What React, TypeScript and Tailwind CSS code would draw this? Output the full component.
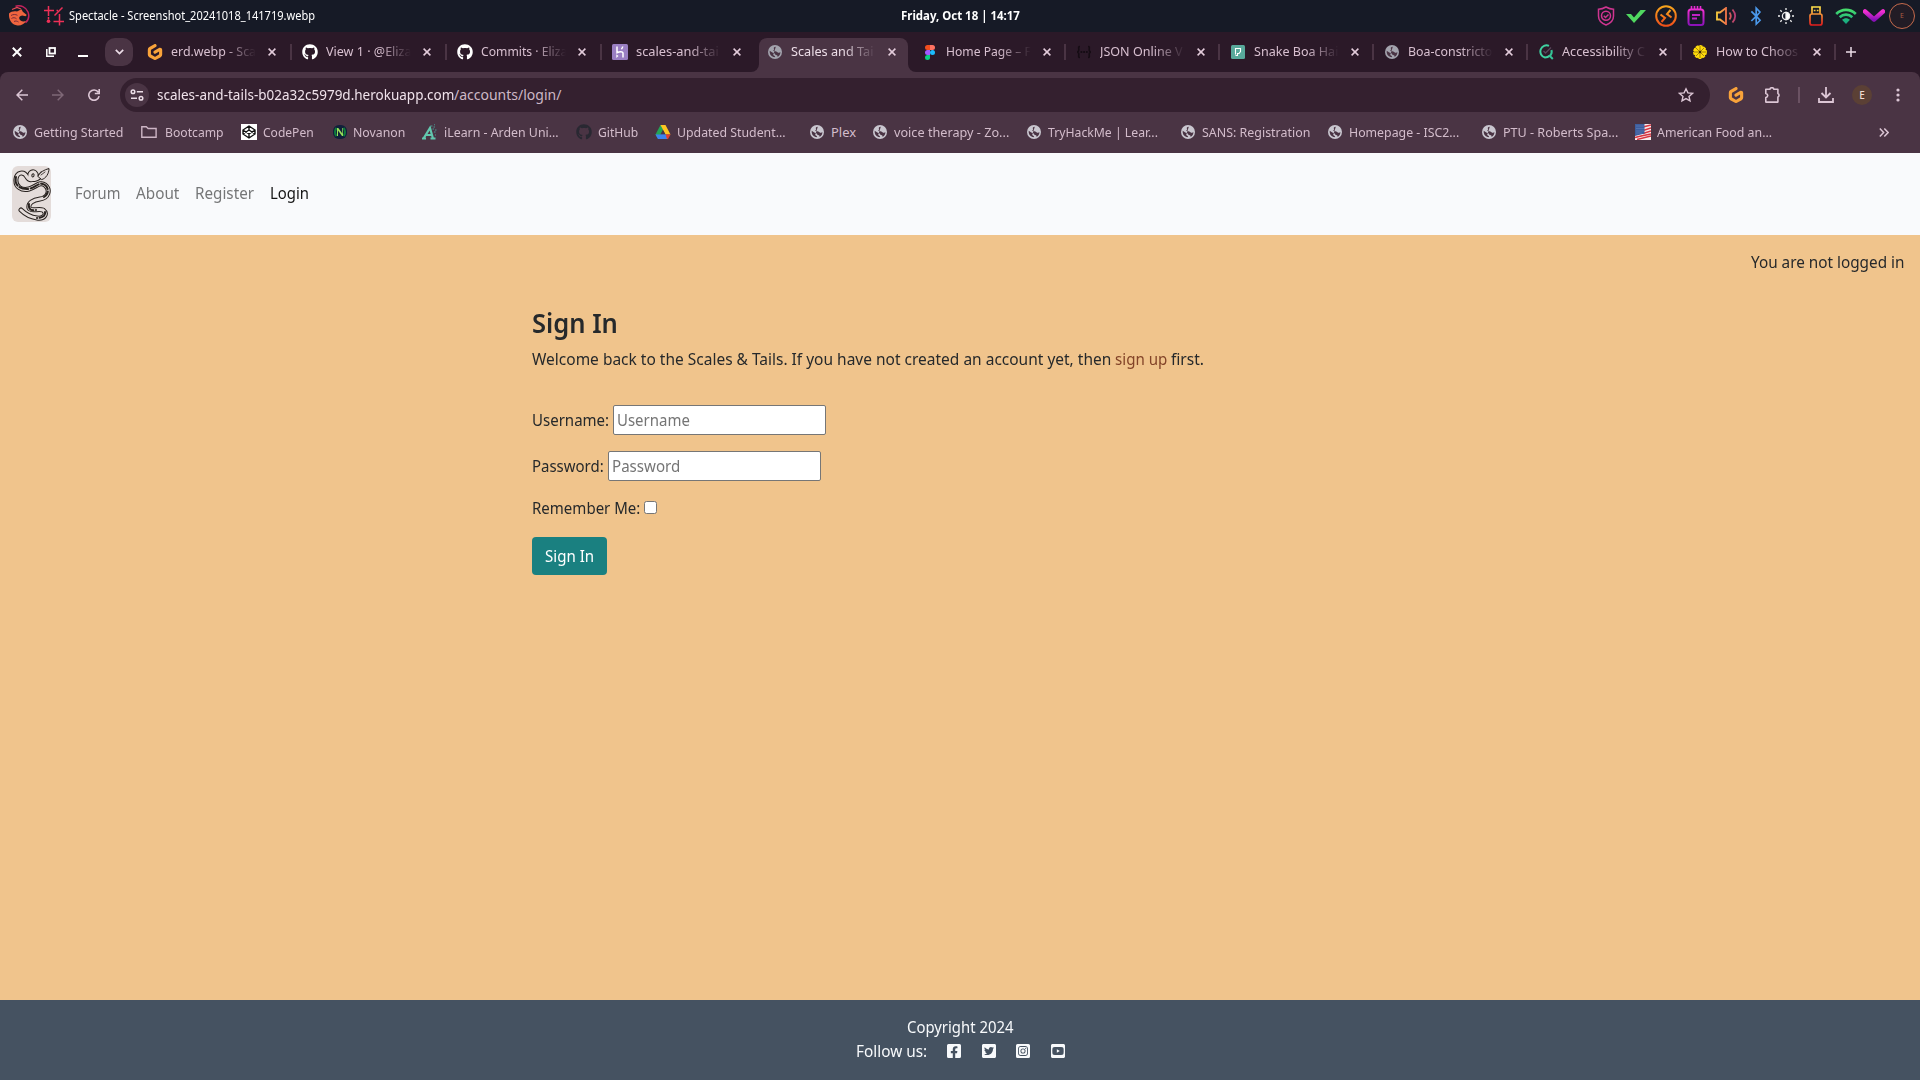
import { useLayoutEffect, useRef, useState, type ReactNode } from "react";
import { clsx } from "clsx";
import {
  FaBluetoothB,
  FaFacebookSquare,
  FaGithub,
  FaInstagramSquare,
  FaTwitterSquare,
  FaYoutubeSquare,
} from "react-icons/fa";
import { SiGitpod } from "react-icons/si";

/** Condenses or widens a single line of text so that it fills its box. */
function Fit({ className, children }: { className: string; children: ReactNode }) {
  const outer = useRef<HTMLSpanElement>(null);
  const inner = useRef<HTMLSpanElement>(null);
  const [scale, setScale] = useState(1);
  useLayoutEffect(() => {
    if (outer.current && inner.current) {
      setScale(outer.current.clientWidth / inner.current.offsetWidth);
    }
  }, []);
  return (
    <span ref={outer} className={clsx("inline-block shrink-0 whitespace-nowrap", className)}>
      <span ref={inner} className="inline-block origin-left" style={{ transform: `scaleX(${scale})` }}>
        {children}
      </span>
    </span>
  );
}

/* ---------- shared glyphs ---------- */

function Globe({ className }: { className: string }) {
  return (
    <svg viewBox="0 0 14 14" className={clsx("size-3.5", className)}>
      <circle cx="7" cy="7" r="7" fill="currentColor" />
      <path
        d="M7.800 1.700C6 2 5.300 2.900 6 3.800c.6.9-.5 1.200-.8 1.900.6.700 2 .2 3.200.8.900.500 1.500 1.400 2.500 1.300.700 0 1.200-.4 1.500-.8.100 2.300-1 4-2.800 4.900.1-1.200-.5-1.700-1.500-1.800-.9-.1-1-.9-1.500-1.500-.6-.7-1.600-.5-2.300-1L1.700 5.800c-.4 3 1.100 5.300 3.700 6.200.600.2 1.200.200 1.700.1-.1-1-.6-1.400-1.300-1.700-.8-.4-.6-1.200-.2-1.700"
        fill="#4a3444"
      />
    </svg>
  );
}

function GitpodMark() {
  return <SiGitpod className="size-4 text-[#f9a33a]" />;
}

function HerokuMark() {
  return (
    <svg viewBox="0 0 16 16" className="size-4">
      <rect width="16" height="16" rx="1.500" fill="#9a7fc2" />
      <path d="M5 2.500v6.200c2-.9 6-1.900 6 .6v4.200M10.700 2.500c-.1 1-.5 1.800-1.300 2.600" stroke="#fff" strokeWidth="1.500" fill="none" />
      <path d="M4.300 10.200v3.800l2.200-1.900z" fill="#fff" />
    </svg>
  );
}

function FigmaMark() {
  return (
    <svg viewBox="0 0 10 15" className="h-[15px] w-2.5">
      <path d="M5 0H2.500a2.500 2.500 0 000 5H5z" fill="#f24e1e" />
      <path d="M5 0h2.500a2.500 2.500 0 010 5H5z" fill="#ff7262" />
      <path d="M5 5H2.500a2.500 2.500 0 000 5H5z" fill="#a259ff" />
      <circle cx="7.500" cy="7.500" r="2.500" fill="#1abcfe" />
      <path d="M2.500 10H5v2.500A2.500 2.500 0 112.500 10z" fill="#0acf83" />
    </svg>
  );
}

function JsonMark() {
  return (
    <svg viewBox="0 0 16 14" className="h-3.5 w-4" fill="none" stroke="#150c14" strokeWidth="1.600">
      <path d="M4 1.500C2 1.500 2.800 3 2.800 4.500S2.500 7 1 7c1.500 0 1.800 1 1.800 2.500S2 12.500 4 12.500M12 1.500c2 0 1.200 1.500 1.200 3S13.500 7 15 7c-1.500 0-1.800 1-1.800 2.500s.8 3-1.200 3" />
      <path d="M4.500 7h1.800M7.200 7H9M9.900 7h1.800" strokeWidth="1.800" />
    </svg>
  );
}

function PetMark() {
  return (
    <svg viewBox="0 0 14 14" className="size-3.5">
      <rect width="14" height="14" rx="1.500" fill="#58a99b" />
      <path d="M4.500 9.500V3.500H9.500V6.500L8 8.500H6.500V10.500H4.500" stroke="#fff" strokeWidth="1.100" fill="none" />
    </svg>
  );
}

function AccessMark() {
  return (
    <svg viewBox="0 0 16 16" className="size-4" fill="none">
      <path d="M11 1.800A6.200 6.200 0 107 13.500c2 0 3.500-.6 4.600-1.700" stroke="#3fd0a0" strokeWidth="2" />
      <path d="M13.500 6c.6 2.200 0 4.300-1.700 6l3 3" stroke="#35c596" strokeWidth="2" />
      <path d="M5.500 7l2 2L13 3.500" stroke="#57455a" strokeWidth="1.300" />
    </svg>
  );
}

function CitrusMark() {
  return (
    <svg viewBox="0 0 14 14" className="size-3.5">
      <circle cx="7" cy="7" r="6.200" fill="#ffdc0a" stroke="#ffdc0a" strokeWidth="1.400" strokeDasharray="3 1" />
      <path d="M7 1v12M1 7h12M2.800 2.800l8.400 8.400M11.200 2.800l-8.400 8.400" stroke="#7d5c10" strokeWidth=".7" />
      <circle cx="7" cy="7" r="1.200" fill="#3a2508" />
    </svg>
  );
}

function CloseGlyph() {
  return (
    <svg viewBox="0 0 8 8" className="size-2">
      <path d="M.6.6l6.800 6.800M7.400.6L.6 7.400" stroke="#e3ccdb" strokeWidth="1.500" />
    </svg>
  );
}

/* ---------- desktop panel ---------- */

function Panel() {
  return (
    <div className="grid h-8 grid-cols-[1fr_auto_1fr] items-center bg-[#161a26] text-white">
      <div className="flex items-center pl-2">
        <svg viewBox="0 0 22 22" className="size-[22px]" fill="none">
          <path d="M7.500 1.200c5-1.500 10.500.8 12.500 5.800 1.500 4 .5 8-2.500 10.800" stroke="#c0225c" strokeWidth="1.500" />
          <path d="M1 8.500C3 6.500 6 5.800 9 6.500l4.500-2.200 1.300 2.500 4 3.200-1.300 1.300-3.300-.8c-2.500.2-3.500 1.800-2.800 3.500.900 2.300 3.600 3 6.600 2-2 3.500-5.500 5-9.500 4.300C3.500 19.300.5 14.500 1 8.500z" fill="#f0653f" />
          <path d="M3 10.500c2-1.300 4.500-1.300 6.500-.2M3.500 13.500c1.700-1.200 3.500-1 5 .3M6 16.500c1.500-.8 3-.5 4.500.5" stroke="#7b2b38" />
          <path d="M4 4.500L9 2.500l4 1.500" stroke="#e84a55" strokeWidth="1.300" />
        </svg>
        <svg viewBox="0 0 20 20" className="ml-3.5 size-5" fill="none" stroke="#ee3057" strokeWidth="1.500">
          <path d="M4.500 0v10M0 4.500h10M12.500 4.500H14M15.500 8v11.500M9.500 15.500H20M4.500 11v2.500M18.500 1.500l-8 8" />
          <circle cx="4.500" cy="15.300" r="1.800" fill="#ee3057" stroke="none" />
        </svg>
        <Fit className="ml-[5px] w-[246px] text-[12.500px] leading-[29px]">
          <span className="block -translate-y-px">Spectacle - Screenshot_20241018_141719.webp</span>
        </Fit>
      </div>
      <Fit className="ml-px w-[119px] text-[12.500px] font-bold leading-[30px]">Friday, Oct 18 | 14:17</Fit>
      <Tray />
    </div>
  );
}

function Tray() {
  return (
    <div className="flex items-center justify-end pr-[5px]">
      <svg width="0" height="0" className="absolute">
        <defs>
          <linearGradient id="orange" x1="0" y1="0" x2="0" y2="1">
            <stop stopColor="#f7a51c" />
            <stop offset="1" stopColor="#f0501a" />
          </linearGradient>
          <linearGradient id="magenta" x1="0" y1="0" x2="0" y2="1">
            <stop stopColor="#f12fd0" />
            <stop offset="1" stopColor="#8a12b8" />
          </linearGradient>
          <linearGradient id="sound" gradientUnits="userSpaceOnUse" x1="0" y1="0" x2="21" y2="0">
            <stop stopColor="#f7d33c" />
            <stop offset=".5" stopColor="#f0704a" />
            <stop offset="1" stopColor="#a5307c" />
          </linearGradient>
          <linearGradient id="usb" x1="0" y1="0" x2="0" y2="1">
            <stop stopColor="#ffe14a" />
            <stop offset="1" stopColor="#e01c1c" />
          </linearGradient>
          <linearGradient id="green" gradientUnits="userSpaceOnUse" x1="0" y1="0" x2="0" y2="16">
            <stop stopColor="#4be26a" />
            <stop offset="1" stopColor="#12a583" />
          </linearGradient>
        </defs>
      </svg>
      <span className="flex w-[30px] justify-center">
        <svg viewBox="0 0 18 20" className="h-5 w-[18px]" fill="none" stroke="#cf3590" strokeWidth="1.500">
          <path d="M9 1c2.500 1.500 5 2.200 7.500 2.200V10c0 4.500-3.500 7.500-7.500 9-4-1.500-7.500-4.500-7.500-9V3.200C4 3.200 6.500 2.500 9 1z" />
          <circle cx="9" cy="9.800" r="4.500" />
          <path d="M6.800 9.800l1.700 1.700 3-3" />
        </svg>
      </span>
      <span className="flex w-[30px] justify-center">
        <svg viewBox="0 0 20 13" className="h-[13px] w-5">
          <path d="M0 4h5l3 3.500L14.500 0H20L8 13z" fill="#50d860" />
        </svg>
      </span>
      <span className="flex w-[30px] justify-center">
        <svg viewBox="0 0 22 22" className="size-[22px]" fill="none" stroke="url(#orange)" strokeWidth="2">
          <circle cx="11" cy="11" r="9.800" />
          <path d="M5.500 9.500L10 13l-3.500 4M16.500 12.500L12 9l3.500-4" />
        </svg>
      </span>
      <span className="flex w-[30px] justify-center">
        <svg viewBox="0 0 18 20" className="h-5 w-[18px]" fill="none" stroke="url(#magenta)" strokeWidth="2">
          <rect x="1.500" y="3.500" width="15" height="15.500" rx="2.500" />
          <path d="M4.500 0v4M7.500 0v4M10.500 0v4M13.500 0v4" stroke="#e42cd2" strokeWidth="1.600" />
          <path d="M5 9h8M5 12.500h5" stroke="#c122c6" />
        </svg>
      </span>
      <span className="flex w-[30px] justify-center">
        <svg viewBox="0 0 21 18" className="h-[18px] w-[21px]" fill="none" stroke="url(#sound)" strokeWidth="1.800">
          <path d="M1 5.500h3L10 1v16l-6-4.500H1z" />
          <path d="M13.500 5.500c1.500 2 1.500 5 0 7M16.500 2.500c3.300 4 3.300 9 0 13" />
        </svg>
      </span>
      <span className="flex w-[30px] justify-center">
        <FaBluetoothB className="h-5 w-4 text-[#4a98ea]" />
      </span>
      <span className="flex w-[30px] justify-center">
        <svg viewBox="0 0 16 16" className="size-4" fill="none" stroke="#eee" strokeWidth="1.300">
          <circle cx="8" cy="8" r="3.600" />
          <path d="M8 4.400a3.600 3.600 0 010 7.200z" fill="#fff" />
          <path d="M8 0v2M8 14v2M0 8h2M14 8h2M2.300 2.300l1.500 1.500M12.200 12.200l1.500 1.500M13.700 2.300l-1.500 1.500M3.800 12.200l-1.500 1.500" />
        </svg>
      </span>
      <span className="flex w-[30px] justify-center">
        <svg viewBox="0 0 14 20" className="h-5 w-3.5" fill="none" stroke="url(#usb)" strokeWidth="1.700">
          <path d="M3 8V1h8v7M3 8h8a2 2 0 012 2v7a2 2 0 01-2 2H3a2 2 0 01-2-2v-7a2 2 0 012-2z" />
          <path d="M4.800 4.500h1.700M7.800 4.500h1.700" stroke="#f5c93c" />
        </svg>
      </span>
      <span className="flex w-[30px] justify-center">
        <svg viewBox="0 0 22 16" className="h-4 w-[22px]" fill="none" stroke="url(#green)" strokeWidth="2.600">
          <path d="M1.200 6c5.500-5.500 14-5.500 19.600 0M4.700 9.200c3.600-3.500 9-3.500 12.600 0" />
          <path d="M7 11.800c2.500-2.100 5.500-2.100 8 0L11 16z" fill="url(#green)" stroke="none" />
        </svg>
      </span>
      <span className="flex w-[26px] justify-center">
        <svg viewBox="0 0 22 14" className="h-3.5 w-[22px]" fill="none">
          <path d="M2 2.500l9 8 9-8" stroke="url(#magenta)" strokeWidth="4.500" strokeLinejoin="round" strokeLinecap="round" />
        </svg>
      </span>
      <span className="ml-0.5 flex size-[26px] items-center justify-center rounded-full border border-[#c56a4c] bg-[#221c25] text-[7px] text-[#a85a42]">
        E
      </span>
    </div>
  );
}

/* ---------- tab strip ---------- */

type Tab = { title: string; width: string; cell: string; icon: ReactNode; divider?: boolean; active?: boolean };

const wide = "w-[155px]";
const narrow = "w-[154px]";

const tabs: Tab[] = [
  { title: "erd.webp - Sca", width: "w-[85px]", cell: wide, icon: <GitpodMark />, divider: true },
  { title: "View 1 · @Eliza", width: "w-[86px]", cell: wide, icon: <FaGithub className="size-4 text-white" />, divider: true },
  { title: "Commits · Eliza", width: "w-[86px]", cell: wide, icon: <FaGithub className="size-4 text-white" />, divider: true },
  { title: "scales-and-tai", width: "w-[83px]", cell: wide, icon: <HerokuMark /> },
  { title: "Scales and Tai", width: "w-[83px]", cell: wide, icon: <Globe className="text-[#a3a3ad]" />, active: true },
  { title: "Home Page – F", width: "w-[85px]", cell: narrow, icon: <FigmaMark />, divider: true },
  { title: "JSON Online V", width: "w-[83px]", cell: narrow, icon: <JsonMark />, divider: true },
  { title: "Snake Boa Hai", width: "w-[84px]", cell: narrow, icon: <PetMark />, divider: true },
  { title: "Boa-constricto", width: "w-[84px]", cell: narrow, icon: <Globe className="text-[#a3a3ad]" />, divider: true },
  { title: "Accessibility C", width: "w-[83px]", cell: narrow, icon: <AccessMark />, divider: true },
  { title: "How to Choos", width: "w-[82px]", cell: narrow, icon: <CitrusMark />, divider: true },
];

function TabItem({ tab }: { tab: Tab }) {
  return (
    <div className={clsx("relative flex h-full shrink-0 items-center", tab.cell)}>
      {tab.active && (
        <div className="absolute bottom-0 left-0.5 top-1.5 w-[149px] rounded-t-lg bg-[#4a3444]">
          <span className="absolute -left-2 bottom-0 size-2 bg-[#4a3444]">
            <span className="block size-2 rounded-br-lg bg-[#2b1928]" />
          </span>
          <span className="absolute -right-2 bottom-0 size-2 bg-[#4a3444]">
            <span className="block size-2 rounded-bl-lg bg-[#2b1928]" />
          </span>
        </div>
      )}
      <span className="relative ml-2.5 flex w-4 justify-center">{tab.icon}</span>
      <span className="relative mb-0.5 ml-2 flex w-[85px] overflow-hidden [mask-image:linear-gradient(to_right,black_62%,transparent_100%)]">
        <Fit className={clsx("text-[13px] leading-5", tab.width, tab.active ? "text-[#ecdde7]" : "text-[#d8c0d0]")}>{tab.title}</Fit>
      </span>
      <span className="relative ml-3 flex">
        <CloseGlyph />
      </span>
      {tab.divider && <span className="absolute right-0 h-4 w-0.5 bg-[#4a3444]" />}
    </div>
  );
}

function TabStrip() {
  return (
    <div className="flex h-10 items-center bg-[#2b1928]">
      <svg viewBox="0 0 10 10" className="ml-3 size-2.5">
        <path d="M.8.8l8.400 8.400M9.200.8L.8 9.200" stroke="#fff" strokeWidth="2" />
      </svg>
      <svg viewBox="0 0 10 10" className="ml-6 size-2.5" fill="none" stroke="#fff">
        <rect x="3.500" y="1" width="5.500" height="5.500" strokeWidth="1.800" />
        <path d="M.8 2v7.200H8" strokeWidth="1.500" />
      </svg>
      <span className="ml-[22px] mt-2 h-0.5 w-2.5 bg-white" />
      <span className="ml-[17px] flex size-7 items-center justify-center rounded-[10px] bg-[#4a3444]">
        <svg viewBox="0 0 9 6" className="h-1.5 w-[9px]" fill="none">
          <path d="M.8.8L4.500 4.500 8.200.8" stroke="#ecdde7" strokeWidth="1.700" />
        </svg>
      </span>
      <div className="ml-1 flex h-full">
        {tabs.map((t) => (
          <TabItem key={t.title} tab={t} />
        ))}
      </div>
      <svg viewBox="0 0 10 10" className="ml-2.5 size-2.5">
        <path d="M5 0v10M0 5h10" stroke="#ecdde7" strokeWidth="1.500" />
      </svg>
    </div>
  );
}

/* ---------- toolbar ---------- */

function Toolbar() {
  return (
    <div className="flex h-[46px] items-center text-[#dcc6d5]">
      <svg viewBox="0 0 12 12" className="ml-4 size-3" fill="none" stroke="currentColor" strokeWidth="1.500">
        <path d="M12 6H1M6.300.7L1 6l5.300 5.300" />
      </svg>
      <svg viewBox="0 0 12 12" className="ml-6 size-3 text-[#7f6877]" fill="none" stroke="currentColor" strokeWidth="1.500">
        <path d="M0 6h11M5.700.7L11 6l-5.300 5.300" />
      </svg>
      <svg viewBox="0 0 12 12" className="ml-6 size-3" fill="none" stroke="currentColor" strokeWidth="1.600">
        <path d="M10.300 3.200A5.200 5.200 0 1011.100 7.200M11.200 0v4.500H6.800" />
      </svg>
      <div className="ml-5 flex h-[34px] w-[1590px] items-center rounded-full bg-[#34202f] pl-[5px]">
        <span className="flex size-6 items-center justify-center rounded-full bg-[#4a3444]">
          <svg viewBox="0 0 14 12" className="h-3 w-3.5" fill="none" stroke="#ecdde7" strokeWidth="1.500">
            <circle cx="3" cy="2.800" r="1.800" />
            <path d="M6.800 2.800H13M1 9.200h6" />
            <circle cx="11" cy="9.200" r="1.800" />
          </svg>
        </span>
        <Fit className="ml-2 w-[297px] text-[14px] leading-6 text-[#f0e2eb]">scales-and-tails-b02a32c5979d.herokuapp.com</Fit>
        <Fit className="w-[107px] text-[14px] leading-6 text-[#cdb8c6]">/accounts/login/</Fit>
        <svg viewBox="0 0 16 16" className="ml-auto mr-4 size-4" fill="none" stroke="currentColor" strokeWidth="1.400">
          <path d="M8 1.800l1.900 4.100 4.500.5-3.400 3 1 4.500L8 11.600l-4 2.300 1-4.500-3.400-3 4.500-.5z" />
        </svg>
      </div>
      <span className="ml-[18px]">
        <GitpodMark />
      </span>
      <svg viewBox="0 0 18 16" className="ml-5 h-4 w-[18px]" fill="none" stroke="currentColor" strokeWidth="1.600">
        <path d="M1.800 2.300H6a1.900 1.600 0 013.800 0h4.100v4.200a1.700 1.900 0 010 3.600v5H1.800v-4.500c2.600-.6 2.600-3.500 0-4.100z" strokeLinejoin="round" />
      </svg>
      <span className="ml-4 h-4 w-0.5 bg-[#6b5263]" />
      <svg viewBox="0 0 16 16" className="ml-[18px] size-4" fill="none" stroke="currentColor" strokeWidth="1.800">
        <path d="M8 0v10M3.500 6L8 10.500 12.500 6M1 11v4h14v-4" />
      </svg>
      <span className="ml-[18px] flex size-5 items-center justify-center rounded-full bg-[#5b4035] text-[10px] font-medium text-[#f0dcd0]">E</span>
      <svg viewBox="0 0 4 14" className="ml-6 h-3.5 w-1" fill="currentColor">
        <circle cx="2" cy="2" r="1.600" />
        <circle cx="2" cy="7" r="1.600" />
        <circle cx="2" cy="12" r="1.600" />
      </svg>
    </div>
  );
}

/* ---------- bookmarks ---------- */

const globe = <Globe className="text-[#c9c6cf]" />;

const bookmarks: { label: string; cell: string; text: string; icon: ReactNode }[] = [
  { label: "Getting Started", cell: "w-[129px]", text: "w-[89px]", icon: globe },
  {
    label: "Bootcamp",
    cell: "w-[100px] gap-2",
    text: "w-[59px]",
    icon: (
      <svg viewBox="0 0 16 12" className="h-3 w-4" fill="none" stroke="#cdb5c5" strokeWidth="1.400">
        <path d="M.8.8h4.500l1.800 1.700h8v8.700H.8z" />
      </svg>
    ),
  },
  {
    label: "CodePen",
    cell: "w-[91px]",
    text: "w-[51px]",
    icon: (
      <svg viewBox="0 0 16 16" className="size-4" fill="none" stroke="#111" strokeWidth="1.400">
        <rect width="16" height="16" fill="#fff" stroke="none" />
        <path d="M8 2l6 4v4l-6 4-6-4V6zM2 6l6 4 6-4M2 10l6-4 6 4M8 2v4M8 10v4" />
      </svg>
    ),
  },
  {
    label: "Novanon",
    cell: "w-[90px] gap-[5px]",
    text: "w-[52px]",
    icon: (
      <svg viewBox="0 0 14 14" className="size-3.5">
        <rect width="14" height="14" rx="6" fill="#11203a" />
        <path d="M3.500 3C1.500 5 1.500 9 3.500 11M10.500 3c2 2 2 6 0 8" stroke="#0f7d3c" strokeWidth="2" fill="none" />
        <path d="M4 11V3h1.300l4 5.500V3H10v8H9L5 5.500V11z" fill="#9adf5a" />
      </svg>
    ),
  },
  {
    label: "iLearn - Arden Uni...",
    cell: "w-[154px]",
    text: "w-[115px]",
    icon: (
      <svg viewBox="0 0 16 16" className="size-4" fill="none">
        <path d="M1.500 14.500L8 4l3 10.500M4 11h6M0 14.500h4M8.500 14.500h5" stroke="#62c7ae" strokeWidth="2.200" />
        <path d="M9 2h1.500M11.500 3H13M10.500 5H12M13 6h1.500M12 8h1.500M12 .8h1M13 11h1" stroke="#4d9793" />
      </svg>
    ),
  },
  { label: "GitHub", cell: "w-[79px]", text: "w-10", icon: <FaGithub className="size-4 text-[#292832]" /> },
  {
    label: "Updated Student...",
    cell: "w-[154px]",
    text: "w-[109px]",
    icon: (
      <svg viewBox="0 0 16 14" className="h-3.5 w-4">
        <path d="M5.500 0H8l2.500 4.500L8 4.800 3 14 .5 9.500z" fill="#23a455" />
        <path d="M5.500 0h5l5 9.500h-5z" fill="#fcc520" />
        <path d="M.5 9.500h11L9.500 14H3z" fill="#3d83ee" />
        <path d="M10.500 9.500h5L13 14H9.500z" fill="#e5402f" />
        <path d="M8 5.200l2.300 4.300H5.700z" fill="#4a3444" />
        <path d="M5.500 9.500h5l1.500 4.500H3z" fill="#3d83ee" />
      </svg>
    ),
  },
  { label: "Plex", cell: "w-[63px]", text: "w-[25px]", icon: globe },
  { label: "voice therapy - Zo...", cell: "w-[154px]", text: "w-[115px]", icon: globe },
  { label: "TryHackMe | Lear...", cell: "w-[154px]", text: "w-[110px]", icon: globe },
  { label: "SANS: Registration", cell: "w-[147px]", text: "w-[108px]", icon: globe },
  { label: "Homepage - ISC2...", cell: "w-[154px]", text: "w-[110px]", icon: globe },
  { label: "PTU - Roberts Spa...", cell: "w-[154px]", text: "w-[115px]", icon: globe },
  {
    label: "American Food an...",
    cell: "w-[154px]",
    text: "w-[115px]",
    icon: (
      <svg viewBox="0 0 16 16" className="size-4">
        <rect width="16" height="16" fill="#f7ecec" />
        <path d="M8 3l8-2M8 6.500L16 4M8 9.500l8-2.500M0 13.500l6-1.500 10-2M2 15.500l14-3.500" stroke="#d83440" strokeWidth="1.500" />
        <path d="M0 0h9.500v9.500L0 12z" fill="#3d5e9e" />
        <path d="M1.500 2h7M1.500 4.500h7M1.500 7h7M1.500 9h5" stroke="#8098c8" strokeWidth=".7" strokeDasharray="1 1" />
      </svg>
    ),
  },
];

function Bookmarks() {
  return (
    <div className="flex h-[35px] items-center pb-[7px] pl-3 text-[13px] leading-5 text-[#d3bccb]">
      {bookmarks.map((b) => (
        <div key={b.label} className={clsx("flex shrink-0 items-center", !b.cell.includes("gap") && "gap-1.5", b.cell)}>
          <span className="flex w-4 shrink-0 justify-center">{b.icon}</span>
          <Fit className={clsx("mb-px", b.text)}>{b.label}</Fit>
        </div>
      ))}
      <svg viewBox="0 0 10 9" className="ml-auto mr-[31px] h-[9px] w-2.5" fill="none" stroke="#dcc6d5" strokeWidth="1.500">
        <path d="M.8.6l3.800 3.900L.8 8.400M5.300.6l3.800 3.900-3.800 3.900" />
      </svg>
    </div>
  );
}

/* ---------- web page ---------- */

function SnakeLogo() {
  const body =
    "M30 8C26 14 20 15 18 11 17 6 22 4 24 8 25 13 18 16 15 11 12 5 5 6 4 13 3 21 10 25 17 23 24 21 28 15 33 19 39 24 36 32 28 33 21 34 16 37 17 42 19 46 26 42 31 44 36 48 32 53 25 52 18 51 13 48 9 44";
  return (
    <svg viewBox="0 0 39 56" className="h-14 w-[39px] rounded-md bg-[#e4dcda]" fill="none" strokeLinecap="round" strokeLinejoin="round">
      <path d={body} stroke="#292320" strokeWidth="5" />
      <path d={body} stroke="#e4dcda" strokeWidth="3" />
      <path d="M4 11c-2 7 3 13 13 12 7-2 11-8 16-4 4 3 4 9-1 12M17 38c-1 5 2 7 7 6M33 46c1 4-3 6-8 6" stroke="#292320" strokeWidth="2" strokeDasharray="9 2.500" />
      <path d="M26 10c2-4 6-6 11-7.500 0 5-3 10-7 11z" fill="#e4dcda" stroke="#292320" />
      <path d="M29 9l4-3" stroke="#292320" strokeWidth=".8" />
    </svg>
  );
}

function Navbar() {
  return (
    <nav className="flex h-[82px] items-center bg-[#f9fafc] pl-3 text-[16px] leading-6 text-[#757677]">
      <SnakeLogo />
      <div className="mb-0.5 ml-6 flex">
        <Fit className="w-[45px]">Forum</Fit>
        <Fit className="ml-4 w-[43px]">About</Fit>
        <Fit className="ml-4 w-[59px]">Register</Fit>
        <Fit className="ml-4 w-[39px] text-[#141414]">Login</Fit>
      </div>
    </nav>
  );
}

const fieldClass = "flex h-[30px] w-[213px] items-center rounded-[2px] border border-[#767676] bg-white pb-px pl-[3px] text-[#757575]";

function SignIn() {
  return (
    <main className="flex-1 bg-[#f0c48c] text-[16px] leading-6 text-[#26292b]">
      <div className="flex justify-end pr-4 pt-[15px]">
        <Fit className="w-[153px]">You are not logged in</Fit>
      </div>
      <div className="ml-[532px] mt-8">
        <h1 className="flex text-[27px] font-semibold leading-[34px]">
          <Fit className="w-[86px]">Sign In</Fit>
        </h1>
        <p className="mt-[7px] flex">
          <Fit className="w-[579px]">Welcome back to the Scales &amp; Tails. If you have not created an account yet, then</Fit>
          <a className="ml-1 flex text-[#834428]">
            <Fit className="w-[52px]">sign up</Fit>
          </a>
          <Fit className="ml-1 w-[33px]">first.</Fit>
        </p>
        <form className="mt-[34px]">
          <div className="flex h-[30px] items-center">
            <Fit className="w-[77px]">Username:</Fit>
            <div className={clsx("ml-1", fieldClass)}>
              <Fit className="w-[73px]">Username</Fit>
            </div>
          </div>
          <div className="mt-4 flex h-[30px] items-center">
            <Fit className="w-[72px]">Password:</Fit>
            <div className={clsx("ml-1", fieldClass)}>
              <Fit className="w-[68px]">Password</Fit>
            </div>
          </div>
          <div className="mt-[15px] flex h-6 items-center">
            <Fit className="w-[108px]">Remember Me:</Fit>
            <span className="-mt-px ml-1 size-[13px] rounded-[2.500px] border border-[#767676] bg-white" />
          </div>
          <button type="button" className="mt-[17px] flex h-[38px] w-[75px] items-center justify-center rounded bg-[#1a8080] pb-px text-white">
            <Fit className="w-[49px]">Sign In</Fit>
          </button>
        </form>
      </div>
    </main>
  );
}

function Footer() {
  return (
    <footer className="flex h-20 flex-col items-center bg-[#455261] pt-[15px] text-[16px] leading-6 text-[#f8fafc]">
      <Fit className="w-[106px]">Copyright 2024</Fit>
      <div className="ml-0.5 flex items-center">
        <Fit className="w-[71px]">Follow us:</Fit>
        <div className="ml-[19px] flex gap-[18.500px] text-[16px]">
          <FaFacebookSquare />
          <FaTwitterSquare />
          <FaInstagramSquare />
          <FaYoutubeSquare />
        </div>
      </div>
    </footer>
  );
}

export default function App() {
  return (
    <div className="flex h-[1080px] w-[1920px] flex-col overflow-hidden font-['Noto_Sans',sans-serif]">
      <Panel />
      <TabStrip />
      <div className="bg-[#2b1928]">
        <div className="rounded-t-lg bg-[#4a3444]">
          <Toolbar />
          <Bookmarks />
        </div>
      </div>
      <Navbar />
      <SignIn />
      <Footer />
    </div>
  );
}
